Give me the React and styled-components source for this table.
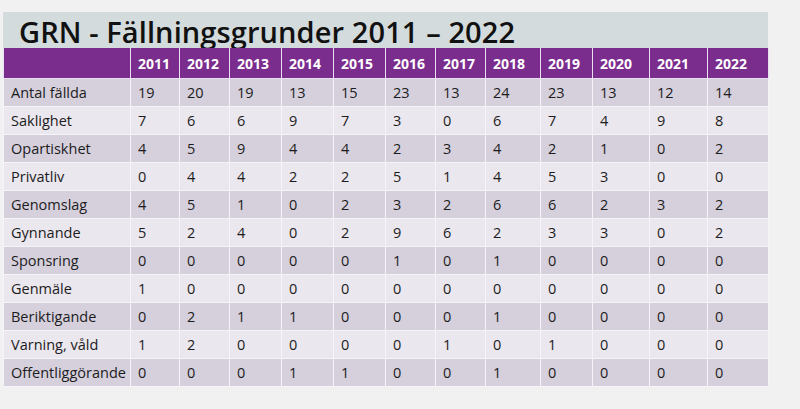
import styled, { createGlobalStyle } from "styled-components";

const GlobalStyle = createGlobalStyle`
  html, body {
    margin: 0;
    padding: 0;
    background: #f1f1f1;
  }
`;

const Page = styled.div`
  width: 800px;
  height: 409px;
  padding: 12px 0 0 3px;
  box-sizing: border-box;
  font-family: "Open Sans", "Liberation Sans", sans-serif;
`;

const Slide = styled.div`
  width: 765px;
  display: flex;
  flex-direction: column;
`;

const TitleBar = styled.div`
  height: 36px;
  background: #d3dbdc;
  display: flex;
  align-items: center;
  padding-left: 16px;
`;

const Title = styled.h1`
  margin: 0;
  font-size: 29px;
  font-weight: 600;
  letter-spacing: 0.1px;
  color: #111;
  line-height: 1;
  padding-top: 2px;
`;

const Table = styled.table`
  border-collapse: collapse;
  table-layout: fixed;
  width: 765px;
`;

const HeadCell = styled.th`
  background: #7b2d8e;
  color: #fff;
  height: 30px;
  padding: 0 0 0 7px;
  text-align: left;
  font-size: 14px;
  font-weight: 700;
  border: 1px solid #e9dff0;
  border-top: none;
`;

const Row = styled.tr`
  background: ${(p) => (p.$dark ? "#d6d0dc" : "#ebe7ee")};
`;

const Cell = styled.td`
  height: 28px;
  padding: 0 0 0 7px;
  font-size: 14.5px;
  color: #1c1c1c;
  border: 1px solid #f6f4f8;
  white-space: nowrap;
  box-sizing: border-box;
`;

const years = [2011, 2012, 2013, 2014, 2015, 2016, 2017, 2018, 2019, 2020, 2021, 2022];
const widths = [127, 49, 50, 52, 52, 52, 50, 50, 55, 52, 57, 58, 61];

const rows = [
  ["Antal fällda", 19, 20, 19, 13, 15, 23, 13, 24, 23, 13, 12, 14],
  ["Saklighet", 7, 6, 6, 9, 7, 3, 0, 6, 7, 4, 9, 8],
  ["Opartiskhet", 4, 5, 9, 4, 4, 2, 3, 4, 2, 1, 0, 2],
  ["Privatliv", 0, 4, 4, 2, 2, 5, 1, 4, 5, 3, 0, 0],
  ["Genomslag", 4, 5, 1, 0, 2, 3, 2, 6, 6, 2, 3, 2],
  ["Gynnande", 5, 2, 4, 0, 2, 9, 6, 2, 3, 3, 0, 2],
  ["Sponsring", 0, 0, 0, 0, 0, 1, 0, 1, 0, 0, 0, 0],
  ["Genmäle", 1, 0, 0, 0, 0, 0, 0, 0, 0, 0, 0, 0],
  ["Beriktigande", 0, 2, 1, 1, 0, 0, 0, 1, 0, 0, 0, 0],
  ["Varning, våld", 1, 2, 0, 0, 0, 0, 1, 0, 1, 0, 0, 0],
  ["Offentliggörande", 0, 0, 0, 1, 1, 0, 0, 1, 0, 0, 0, 0],
];

export default function App() {
  return (
    <>
      <GlobalStyle />
      <Page>
        <Slide>
          <TitleBar>
            <Title>GRN - Fällningsgrunder 2011 – 2022</Title>
          </TitleBar>
          <Table>
            <colgroup>
              {widths.map((w, i) => (
                <col key={i} style={{ width: w }} />
              ))}
            </colgroup>
            <thead>
              <tr>
                <HeadCell />
                {years.map((y) => (
                  <HeadCell key={y}>{y}</HeadCell>
                ))}
              </tr>
            </thead>
            <tbody>
              {rows.map((r, i) => (
                <Row key={r[0]} $dark={i % 2 === 0}>
                  {r.map((v, j) => (
                    <Cell key={j}>{v}</Cell>
                  ))}
                </Row>
              ))}
            </tbody>
          </Table>
        </Slide>
      </Page>
    </>
  );
}
